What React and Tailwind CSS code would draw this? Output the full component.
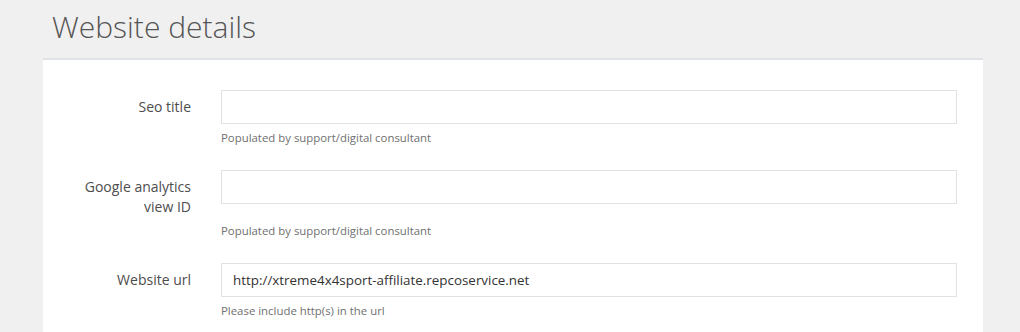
export default function App() {
  const font = { fontFamily: '"Open Sans", "Noto Sans", sans-serif' };
  const groups = [
    { label: ["Seo title"], value: "", help: "Populated by support/digital consultant" },
    { label: ["Google analytics", "view ID"], value: "", help: "Populated by support/digital consultant" },
    { label: ["Website url"], value: "http://xtreme4x4sport-affiliate.repcoservice.net", help: "Please include http(s) in the url" },
  ];
  return (
    <div className="min-h-[332px] w-[1020px] bg-[#f0f0f0] px-[43px]" style={font}>
      <h1 className="pl-[9px] pt-[10px] mb-[15px] text-[30px] leading-[33px] font-light text-[#555555]">
        Website details
      </h1>
      <div className="w-[940px] bg-white border-t-2 border-[#dfe3e7] pt-[30px] pb-[40px]">
        {groups.map((g, i) => (
          <div key={i} className="mb-[24px]">
            <div className="flex items-start">
              <label className="w-[163px] pr-[15px] pt-[7px] text-right text-[14px] leading-[20px] text-[#4d4d4d]">
                {g.label.map((l, j) => (
                  <div key={j}>{l}</div>
                ))}
              </label>
              <div className="ml-[15px] w-[736px] h-[34px] border border-[#e2e2e2] bg-white px-[11px] flex items-center text-[13.4px] text-[#333333]">
                {g.value}
              </div>
            </div>
            <div className="ml-[178px] mt-[5px] text-[11.4px] leading-[17px] text-[#707070]">
              {g.help}
            </div>
          </div>
        ))}
      </div>
    </div>
  );
}
